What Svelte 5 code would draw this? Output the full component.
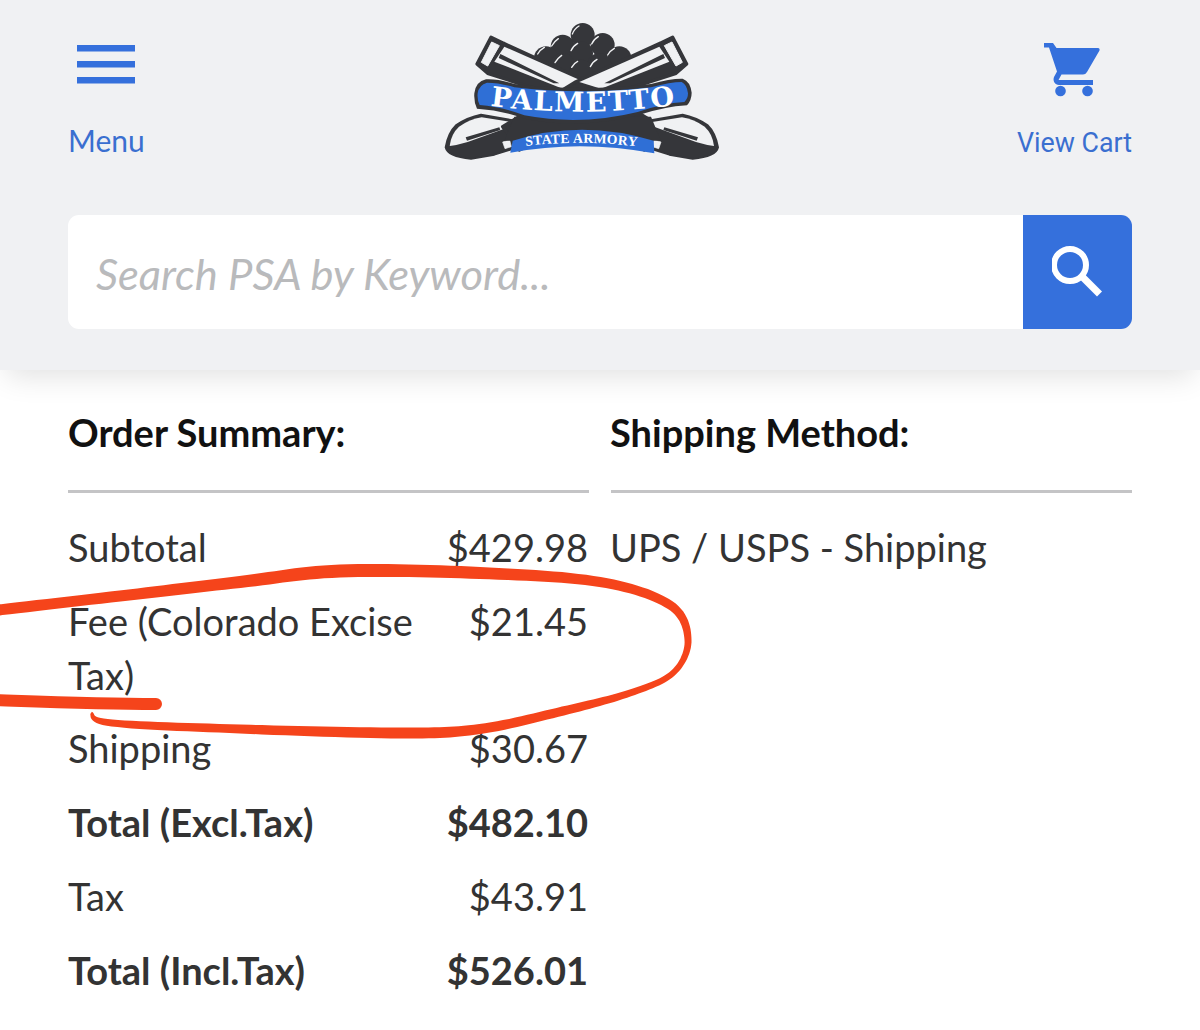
<script>
  const rows = [
    { label: 'Subtotal', value: '$429.98' },
    { label: 'Fee (Colorado Excise Tax)', value: '$21.45' },
    { label: 'Shipping', value: '$30.67' },
    { label: 'Total (Excl.Tax)', value: '$482.10', strong: true },
    { label: 'Tax', value: '$43.91' },
    { label: 'Total (Incl.Tax)', value: '$526.01', strong: true }
  ];
  const balls = [[455,75],[395,110],[515,105],[345,145],[450,130],[565,145],[395,165],[505,165],[450,185]];

  // A pen stroke of varying width: centre line as [x, y, width], sampled on a Catmull-Rom curve.
  function penStroke(pts) {
    const samples = [];
    for (let i = 0; i < pts.length - 1; i++) {
      const p0 = pts[Math.max(i - 1, 0)], p1 = pts[i], p2 = pts[i + 1], p3 = pts[Math.min(i + 2, pts.length - 1)];
      for (let s = 0; s < 14; s++) {
        const t = s / 14;
        samples.push([0, 1, 2].map((k) =>
          0.5 * (2 * p1[k] + (p2[k] - p0[k]) * t + (2 * p0[k] - 5 * p1[k] + 4 * p2[k] - p3[k]) * t * t + (3 * p1[k] - p0[k] - 3 * p2[k] + p3[k]) * t * t * t)
        ));
      }
    }
    samples.push(pts[pts.length - 1]);
    const left = [], right = [];
    samples.forEach((p, i) => {
      const a = samples[Math.max(i - 1, 0)], b = samples[Math.min(i + 1, samples.length - 1)];
      const dx = b[0] - a[0], dy = b[1] - a[1], len = Math.hypot(dx, dy) || 1;
      const nx = (-dy / len) * p[2] / 2, ny = (dx / len) * p[2] / 2;
      left.push(`${(p[0] + nx).toFixed(1)} ${(p[1] + ny).toFixed(1)}`);
      right.unshift(`${(p[0] - nx).toFixed(1)} ${(p[1] - ny).toFixed(1)}`);
    });
    return 'M' + left.concat(right).join('L') + 'z';
  }

  const loop = penStroke([
    [-10,611,11],[120,596,11],[240,582,12],[340,571,13],[480,573,12],[600,582,10],[670,605,9],
    [688,640,7],[673,673,6],[630,693,7],[563,711,9],[480,729,10],[400,733,11],[240,729,9],[112,723,7],[91,713,3]
  ]);
</script>

<div class="page">
  <header class="header">
    <div class="top">
      <button class="nav">
        <svg class="ico" width="58" height="40" viewBox="0 0 58 40"><path d="M0 0h58v6.500H0zM0 16h58v6.500H0zM0 32h58v6.500H0z" /></svg>
        <span>Menu</span>
      </button>
      <svg class="logo" width="300" height="160" viewBox="0 0 900 480" aria-label="Palmetto State Armory">
        <defs>
          <g id="cannon">
            <path d="M180 82 222 102 218 100 470 215 690 350 640 420 430 320 340 245 170 190 138 162z" fill="#35363a" stroke="#35363a" stroke-width="10" stroke-linejoin="round" />
            <path d="M182 96 205 107 170 168 151 157z" fill="#f0f1f3" stroke="#f0f1f3" stroke-width="3" stroke-linejoin="round" />
            <path d="M220 110 460 216 395 236 190 155z" fill="#f0f1f3" />
            <path d="M208 132 216 136 385 220 368 220 203 144z" fill="#35363a" />
            <path d="M44 412Q52 368 76 345Q110 322 150 314L262 334 320 340 250 415 190 434 120 446Q50 440 44 412z" fill="#35363a" stroke="#35363a" stroke-width="6" stroke-linejoin="round" />
            <path d="M56 408Q60 372 84 350Q116 328 152 322L265 340 110 396Q80 405 56 408z" fill="#f0f1f3" />
            <path d="M104 382 205 352 208 360 108 392z" fill="#35363a" />
            <path d="M215 396 236 390 241 410 222 416z" fill="#f0f1f3" stroke="#f0f1f3" stroke-width="2" stroke-linejoin="round" />
          </g>
        </defs>
        {#each balls as b}
          <circle cx={b[0]} cy={b[1]} r="36" fill="#35363a" />
        {/each}
        <g fill="none" stroke="#f0f1f3" stroke-width="4" stroke-linecap="round">
          <path d="M424 72q6-16 20-24M362 108q8-14 20-22M482 102q6-14 20-22M420 122q6-14 20-22M372 158q6-12 20-22M478 170q6-14 20-22M530 135q6-12 20-20M422 172q6-12 18-18" />
          <path d="M320 132q6-12 20-20" />
        </g>
        <use href="#cannon" />
        <use href="#cannon" transform="translate(905,0) scale(-1,1)" />
        <path d="M250 320 660 320 690 392 220 392z" fill="#35363a" />
        <!-- lower ribbon -->
        <path d="M245 392Q450 326 668 392L670 430Q450 388 238 428z" fill="#2f6fd6" />
        <path id="lowarc" d="M284 408Q450 388 624 410" fill="none" />
        <text class="lt"><textPath href="#lowarc">STATE ARMORY</textPath></text>
        <!-- upper banner -->
        <path d="M130 250Q134 215 165 208Q200 206 250 222Q450 246 660 222Q720 205 755 206Q778 214 782 248Q782 270 768 286Q700 290 620 316Q450 360 280 326Q210 300 138 296Q128 275 130 250z" fill="#35363a" />
        <path d="M140 250Q144 224 168 218Q205 218 250 232Q450 256 660 232Q720 216 752 216Q768 224 771 250Q771 266 760 276Q695 280 620 306Q450 348 280 316Q210 290 146 285Q138 270 140 250z" fill="#2f6fd6" />
        <path id="toparc" d="M178 287Q455 324 738 284" fill="none" />
        <text class="pt"><textPath href="#toparc">PALMETTO</textPath></text>
      </svg>
      <button class="nav cart">
        <svg class="ico" width="56" height="56" viewBox="0 0 56 56"><path d="M0 0h9l3.500 5H54q2 0 1.500 2.500L43 29q-1.500 2.500-4 2.500H17.500l-3 5.500H49v5H15c-4 0-6.500-4-5-8l3-5.500L5 4.500H0z" /><circle cx="16.500" cy="48" r="5.300" /><circle cx="43.500" cy="48" r="5.300" /></svg>
        <span>View Cart</span>
      </button>
    </div>
    <div class="search">
      <div class="input">Search PSA by Keyword...</div>
      <button class="go" aria-label="Search">
        <svg width="52" height="52" viewBox="0 0 52 52" fill="none" stroke="#fff"><circle cx="18" cy="19" r="16" stroke-width="6" /><path d="M29.500 30l18 18" stroke-width="7" /></svg>
      </button>
    </div>
  </header>

  <main class="content">
    <section class="col">
      <h2>Order Summary:</h2>
      {#each rows as r}
        <div class="row" class:strong={r.strong}>
          <div class="label">{r.label}</div>
          <div class="value">{r.value}</div>
        </div>
      {/each}
    </section>
    <section class="col second">
      <h2>Shipping Method:</h2>
      <div class="row"><div class="label wide">UPS / USPS - Shipping</div></div>
    </section>
  </main>

  <svg class="scribble" width="1200" height="1030" viewBox="0 0 1200 1030" aria-hidden="true">
    <path d={loop} fill="#f5441b" />
    <path d="M-10 700C50 702 100 704 156 704" fill="none" stroke="#f5441b" stroke-width="12" stroke-linecap="round" />
  </svg>
</div>

<style>
  :global(body) { background: #fff; }
  .page {
    position: relative;
    height: 1030px;
    overflow: hidden;
    font-family: Lato, sans-serif;
    color: #333;
  }
  .header {
    height: 370px;
    box-sizing: border-box;
    padding: 20px 68px 0;
    background: #f0f1f3;
    box-shadow: 0 12px 28px -6px rgba(0, 0, 0, 0.12);
    position: relative;
  }
  .top {
    display: flex;
    justify-content: space-between;
    align-items: flex-start;
    height: 195px;
  }
  .nav {
    display: flex;
    flex-direction: column;
    align-items: center;
    padding: 0;
    border: 0;
    background: none;
    font: inherit;
    font-size: 30px;
    line-height: 36px;
    color: #3a6fd0;
  }
  .cart {
    font-family: Roboto, sans-serif;
    font-size: 26.800px;
  }
  .ico { fill: #3570dc; display: block; }
  .nav:first-child .ico { margin: 25px 0 37px; }
  .nav:last-child .ico { margin: 23px 5px 26px 0; }
  .logo { display: block; margin-top: -10px; }
  .lt {
    font-family: "Liberation Serif", serif;
    font-weight: 700;
    font-size: 41px;
    letter-spacing: 1px;
    fill: #fff;
  }
  .pt {
    font-family: "DejaVu Serif", serif;
    font-weight: 700;
    font-size: 82px;
    letter-spacing: 5px;
    fill: #fff;
  }
  .search {
    display: flex;
    height: 114px;
    border-radius: 11px;
    overflow: hidden;
  }
  .input {
    flex: 1;
    display: flex;
    align-items: center;
    padding: 2px 0 0 28px;
    background: #fff;
    font-style: italic;
    font-size: 43.500px;
    color: #b9babc;
  }
  .go {
    width: 109px;
    display: flex;
    align-items: center;
    justify-content: center;
    padding: 0;
    border: 0;
    background: #3570dc;
  }
  .content {
    display: flex;
    gap: 22px;
    padding: 0 68px;
  }
  .col { flex: 1; min-width: 0; }
  .second h2, .second .row { text-indent: -1px; }
  h2 {
    margin: 0 0 17px;
    height: 123px;
    box-sizing: border-box;
    padding-top: 35px;
    border-bottom: 3px solid #c4c4c6;
    font-size: 38px;
    line-height: 54px;
    font-weight: 700;
    color: #111;
  }
  .row {
    display: flex;
    justify-content: space-between;
    gap: 20px;
    padding: 9.900px 0;
    font-size: 38px;
    line-height: 54px;
  }
  .label { width: 350px; }
  .label.wide { width: auto; }
  .value { padding-right: 1px; }
  .strong { font-weight: 700; }
  .scribble {
    position: absolute;
    left: 0;
    top: 0;
    pointer-events: none;
  }
</style>
